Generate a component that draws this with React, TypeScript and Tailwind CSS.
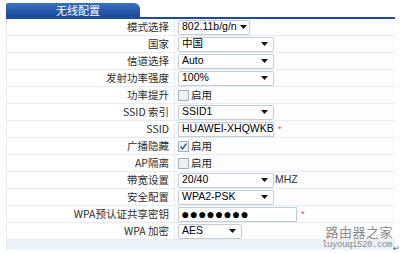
import React from 'react';

const cjk = { fontFamily: '"Noto Sans CJK SC", "Liberation Sans", sans-serif' };

function Caret() {
    return (
        <svg width="7" height="4" viewBox="0 0 7 4" className="shrink-0">
            <path d="M0 0 H7 L3.5 4 Z" fill="#111" />
        </svg>
    );
}

function Select({ value, w }: { value: string; w: string }) {
    return (
        <div className={`${w} h-[15px] border border-[#c3ccd6] bg-white rounded-[2px] flex items-center justify-between gap-[3px] pl-[3px] pr-[5px] text-[10.5px] text-black whitespace-nowrap`}>
            <span>{value}</span>
            <Caret />
        </div>
    );
}

function Check({ on }: { on?: boolean }) {
    return (
        <div className="flex items-center gap-[2px] text-[10.5px] text-[#222]">
            <div className="w-[11px] h-[11px] border border-[#a6afba] bg-[#eef0f3] flex items-center justify-center">
                {on && (
                    <svg width="9" height="9" viewBox="0 0 9 9">
                        <path d="M1.5 4.5 L3.5 7 L7.5 1.5" stroke="#2a4fa8" strokeWidth="1.3" fill="none" />
                    </svg>
                )}
            </div>
            <span style={cjk}>启用</span>
        </div>
    );
}

function Star() {
    return <span className="text-[#ff2d55] text-[9px] ml-[4px] leading-none">*</span>;
}

const rows: { label: string; cell: React.ReactNode }[] = [
    { label: '模式选择', cell: <Select value="802.11b/g/n" w="w-[72px]" /> },
    { label: '国家', cell: <Select value="中国" w="w-[96px]" /> },
    { label: '信道选择', cell: <Select value="Auto" w="w-[96px]" /> },
    { label: '发射功率强度', cell: <Select value="100%" w="w-[96px]" /> },
    { label: '功率提升', cell: <Check /> },
    { label: 'SSID 索引', cell: <Select value="SSID1" w="w-[96px]" /> },
    {
        label: 'SSID',
        cell: (
            <>
                <div className="w-[96px] h-[15px] border border-[#c3ccd6] bg-white flex items-center pl-[3px] text-[10.5px] text-black whitespace-nowrap overflow-hidden">HUAWEI-XHQWKB</div>
                <Star />
            </>
        ),
    },
    { label: '广播隐藏', cell: <Check on /> },
    { label: 'AP隔离', cell: <Check /> },
    {
        label: '带宽设置',
        cell: (
            <>
                <Select value="20/40" w="w-[96px]" />
                <span className="ml-[1px] text-[10.5px] text-[#333]">MHZ</span>
            </>
        ),
    },
    { label: '安全配置', cell: <Select value="WPA2-PSK" w="w-[96px]" /> },
    {
        label: 'WPA预认证共享密钥',
        cell: (
            <>
                <div className="w-[119px] h-[15px] border border-[#c3ccd6] bg-white flex items-center pl-[2px] text-[14px] leading-none text-black whitespace-nowrap overflow-hidden">●●●●●●●●</div>
                <Star />
            </>
        ),
    },
    { label: 'WPA 加密', cell: <Select value="AES" w="w-[64px]" /> },
];

export default function App() {
    return (
        <div className="relative w-[400px] h-[253px] bg-white overflow-hidden" style={{ fontFamily: '"Liberation Sans", "Noto Sans CJK SC", sans-serif' }}>
            <div className="pt-[3px] pl-[6px] pr-[5px]">
                {/* tab header */}
                <div className="w-[134px] h-[14px] rounded-tr-[6px] rounded-tl-[2px] bg-gradient-to-b from-[#3b6fc0] to-[#1b4a9c] flex items-center justify-center">
                    <span className="text-white text-[11px] leading-none pl-[10px]" style={cjk}>无线配置</span>
                </div>
                <div className="h-[2px] bg-[#1d4b9e]" />

                {/* form rows */}
                <div className="border-l border-[#e6ebf1]">
                    {rows.map((r) => (
                        <div key={r.label} className="flex h-[17px] border-b border-[#e6ecf2]">
                            <div className="w-[167px] shrink-0 text-right pr-[5px] text-[10.5px] text-[#2e2e2e] leading-[16px]" style={cjk}>
                                {r.label}
                            </div>
                            <div className="flex-1 flex items-center pl-[3px] border-l border-[#e6ecf2] bg-[#fcfdfe]">{r.cell}</div>
                        </div>
                    ))}
                    <div className="h-[10px] bg-[#eaf1f9]" />
                </div>
            </div>

            {/* watermark */}
            <div className="absolute right-[7px] top-[225px] text-[13px] leading-none text-[#8a8a8a] tracking-[0.5px]" style={{ fontFamily: '"Noto Sans CJK SC", serif' }}>
                路由器之家
            </div>
            <div className="absolute right-[8px] top-[241px] text-[9px] leading-none tracking-[-0.4px] text-[#8a8a8a]" style={{ fontFamily: '"Liberation Mono", monospace' }}>
                luyouqi520.com
            </div>
            <div className="absolute right-0 top-[245px] text-[8px] leading-none text-[#555]">↵</div>
        </div>
    );
}
